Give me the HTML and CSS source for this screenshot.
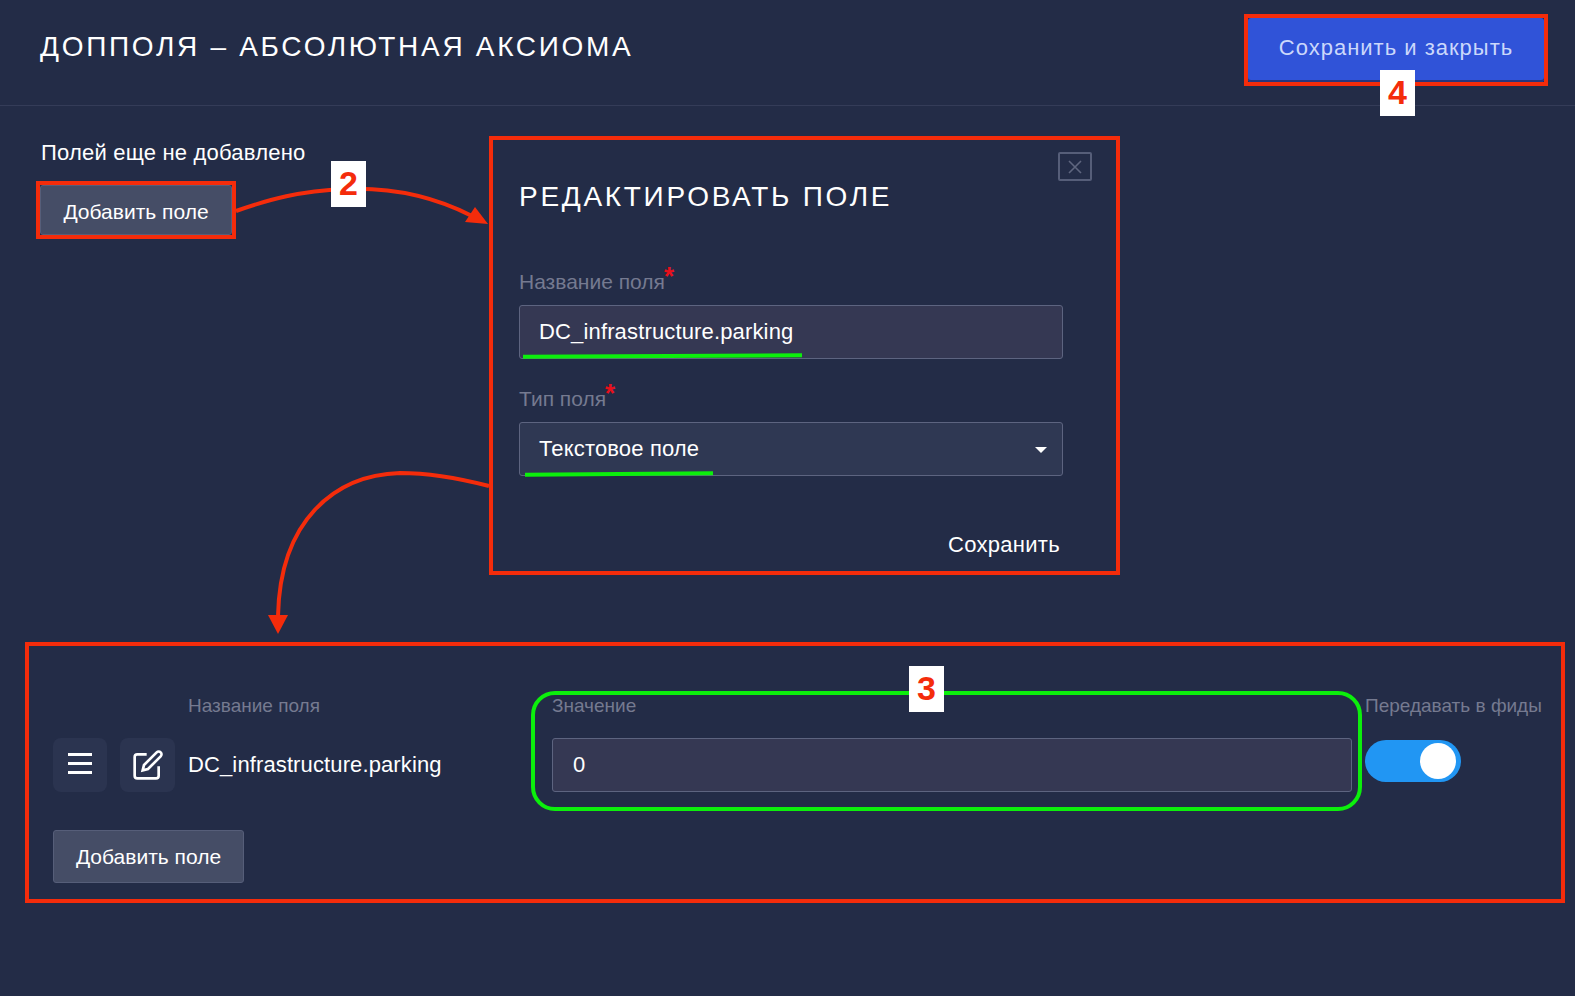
FILE: index.html
```html
<!DOCTYPE html>
<html lang="en">
<head>
    <meta charset="UTF-8">
    <meta name="viewport" content="width=device-width, initial-scale=1.0">
    <title>Допполя – Абсолютная Аксиома</title>
    <link rel="stylesheet" href="styles.css">
</head>
<body>
    <div class="page">
        <header class="page-head">
            <h1 class="page-title">Допполя – Абсолютная Аксиома</h1>
            <div class="mark"><button class="primary-button">Сохранить и закрыть</button></div>
        </header>

        <main class="content">
            <div class="top-row">
                <div class="empty-col">
                    <p class="empty-text">Полей еще не добавлено</p>
                    <div class="mark mark-add"><button class="add-button">Добавить поле</button></div>
                </div>

                <section class="mark modal">
                    <button class="close-button">
                        <svg viewBox="0 0 14 14" width="14" height="14"><path d="M1 1l12 12M13 1L1 13"/></svg>
                    </button>
                    <h2 class="modal-title">Редактировать поле</h2>
                    <label class="field-label">Название поля<span class="req">*</span></label>
                    <div class="text-input underlined">
                        DC_infrastructure.parking
                        <span class="green-line line-name"></span>
                    </div>
                    <label class="field-label">Тип поля<span class="req">*</span></label>
                    <div class="select-input underlined">
                        Текстовое поле
                        <span class="caret"></span>
                        <span class="green-line line-type"></span>
                    </div>
                    <div class="modal-foot"><button class="link-button">Сохранить</button></div>
                </section>
            </div>

            <section class="mark result">
                <div class="field-row">
                    <div class="tool-col">
                        <button class="tool-button">
                            <svg class="menu-icon" viewBox="0 0 24 21" width="24" height="21"><path d="M0 1.500h24M0 10.500h24M0 19.500h24"/></svg>
                        </button>
                        <button class="tool-button">
                            <svg viewBox="0 0 24 24" width="32" height="32"><path d="M11 4H4a2 2 0 0 0-2 2v14a2 2 0 0 0 2 2h14a2 2 0 0 0 2-2v-7"/><path d="M18.500 2.500a2.120 2.120 0 0 1 3 3L12 15l-4 1 1-4 9.500-9.500z"/></svg>
                        </button>
                    </div>
                    <div class="name-col">
                        <div class="col-label">Название поля</div>
                        <div class="name-value">DC_infrastructure.parking</div>
                    </div>
                    <div class="value-col">
                        <div class="col-label">Значение</div>
                        <div class="text-input value-input">0</div>
                        <div class="ring"></div>
                        <div class="badge badge-3">3</div>
                    </div>
                    <div class="feed-col">
                        <div class="col-label">Передавать в фиды</div>
                        <div class="toggle"><span class="knob"></span></div>
                    </div>
                </div>
                <button class="add-button add-button-lower">Добавить поле</button>
            </section>
        </main>

        <!-- arrows and numbers drawn over the screenshot -->
        <svg class="arrows" viewBox="0 0 1575 996" width="1575" height="996">
            <path class="arrow-line" d="M236 211C270 199 300 191 345 189C395 187 435 197 472 216"/>
            <path class="arrow-head" d="M475 207L488 224L465 222z"/>
            <path class="arrow-line" d="M489 486C450 476 420 473 400 473C335 475 280 520 278 616"/>
            <path class="arrow-head" d="M268 615H288L278 634z"/>
        </svg>
        <div class="badge badge-2">2</div>
        <div class="badge badge-4">4</div>
    </div>
</body>
</html>
```

FILE: styles.css
```css
body {
    margin: 0;
    background: #232c47;
    color: #fff;
    font-family: "Liberation Sans", Arial, sans-serif;
    font-size: 22px;
}

button {
    font-family: inherit;
    cursor: pointer;
}

.page {
    position: relative;
    width: 1575px;
    height: 996px;
    overflow: hidden;
}

/* Header */
.page-head {
    display: flex;
    justify-content: space-between;
    align-items: flex-start;
    box-sizing: border-box;
    height: 106px;
    padding: 14px 27px 0 40px;
    border-bottom: 1px solid #343c58;
}

.page-title {
    margin: 17px 0 0;
    font-size: 28px;
    font-weight: 400;
    line-height: 32px;
    letter-spacing: 2.7px;
    text-transform: uppercase;
}

.primary-button {
    display: block;
    width: 296px;
    height: 64px;
    padding: 0 0 4px;
    border: none;
    border-radius: 3px;
    background: #3053d8;
    box-shadow: inset 0 -2px 0 #27367e;
    color: #cbd8fb;
    font-size: 22px;
    letter-spacing: 1px;
}

/* Red boxes of the annotation */
.mark {
    box-sizing: border-box;
    border: 4px solid #f42c0b;
}

/* Top part */
.content {
    padding: 30px 9px 0 25px;
}

.top-row {
    display: flex;
    padding-left: 11px;
}

.empty-col {
    width: 453px;
    padding-top: 1px;
}

.empty-text {
    margin: 2px 0 0 5px;
    line-height: 28px;
    letter-spacing: 0.2px;
}

.mark-add {
    width: 200px;
    margin-top: 14px;
}

.add-button {
    display: block;
    box-sizing: border-box;
    width: 192px;
    height: 50px;
    border: 1px solid #565e79;
    border-radius: 3px;
    background: #454d66;
    color: #fff;
    font-size: 21px;
}

.mark-add .add-button {
    padding-top: 5px;
}

/* Modal */
.modal {
    position: relative;
    width: 631px;
    height: 439px;
    padding: 41px 26px 0;
}

.close-button {
    position: absolute;
    top: 12px;
    right: 24px;
    display: flex;
    align-items: center;
    justify-content: center;
    box-sizing: border-box;
    width: 34px;
    height: 29px;
    padding: 0;
    border: 2px solid #565e79;
    border-radius: 2px;
    background: transparent;
}

.close-button path {
    fill: none;
    stroke: #5f667f;
    stroke-width: 1.6;
}

.modal-title {
    margin: 0 0 56px;
    font-size: 28px;
    font-weight: 400;
    line-height: 32px;
    letter-spacing: 2.7px;
    text-transform: uppercase;
}

.field-label {
    display: block;
    height: 25px;
    margin-bottom: 11px;
    color: #757a90;
    font-size: 21px;
    line-height: 25px;
}

.req {
    position: relative;
    top: -4px;
    margin-left: -1px;
    color: #e8101c;
    font-size: 26px;
    font-weight: 700;
    line-height: 0;
}

.text-input,
.select-input {
    position: relative;
    box-sizing: border-box;
    height: 54px;
    padding-left: 19px;
    border: 1px solid #5d6480;
    border-radius: 3px;
    line-height: 52px;
    white-space: nowrap;
}

.text-input {
    background: #353853;
}

.select-input {
    background: #2f3853;
}

.underlined {
    width: 544px;
    margin-bottom: 27px;
    letter-spacing: 0.15px;
}

.green-line {
    position: absolute;
    height: 4px;
    background: #0cef0c;
}

.line-name {
    left: 3px;
    bottom: 0;
    width: 279px;
    transform: rotate(-0.3deg);
}

.line-type {
    left: 5px;
    bottom: -1px;
    width: 188px;
    transform: rotate(-0.4deg);
}

.caret {
    position: absolute;
    top: 24px;
    right: 15px;
    border-top: 6px solid #fff;
    border-left: 6px solid transparent;
    border-right: 6px solid transparent;
}

.modal-foot {
    display: flex;
    justify-content: flex-end;
    width: 544px;
    margin-top: 55px;
}

.link-button {
    padding: 0 3px 0 0;
    border: none;
    background: transparent;
    color: #fff;
    font-size: 22px;
    line-height: 28px;
    letter-spacing: 0.3px;
}

/* Lower part */
.result {
    position: relative;
    width: 1540px;
    height: 261px;
    margin-top: 67px;
    padding: 48px 0 0 24px;
}

.field-row {
    display: flex;
    align-items: flex-start;
    gap: 13px;
}

.tool-col {
    display: flex;
    gap: 13px;
    padding-top: 44px;
}

.tool-button {
    display: flex;
    align-items: center;
    justify-content: center;
    box-sizing: border-box;
    width: 54px;
    height: 54px;
    padding: 0;
    border: none;
    border-radius: 8px;
    background: #2b3450;
}

.tool-button + .tool-button {
    width: 55px;
}

.tool-button path {
    fill: none;
    stroke: #fff;
    stroke-width: 2;
}

.menu-icon {
    margin-bottom: 4px;
}

.tool-button .menu-icon path {
    stroke-width: 3;
}

.col-label {
    height: 24px;
    margin-bottom: 20px;
    color: #757a90;
    font-size: 19px;
    line-height: 24px;
}

.name-col {
    flex: none;
    width: 351px;
}

.name-value {
    font-size: 22px;
    line-height: 54px;
    letter-spacing: 0.12px;
}

.value-col {
    position: relative;
    flex: none;
    width: 800px;
}

.value-input {
    width: 800px;
    padding-left: 20px;
}

.ring {
    position: absolute;
    top: -3px;
    left: -21px;
    right: -10px;
    bottom: -19px;
    border: 4px solid #0cef0c;
    border-radius: 24px;
}

.feed-col {
    flex: none;
    white-space: nowrap;
}

.toggle {
    position: relative;
    width: 96px;
    height: 42px;
    margin-top: 22px;
    border-radius: 21px;
    background: #2196f3;
}

.knob {
    position: absolute;
    top: 3px;
    right: 5px;
    width: 36px;
    height: 36px;
    border-radius: 50%;
    background: #fff;
}

.add-button-lower {
    width: 191px;
    height: 53px;
    margin-top: 38px;
}

/* Overlay */
.arrows {
    position: absolute;
    top: 0;
    left: 0;
    pointer-events: none;
}

.arrow-line {
    fill: none;
    stroke: #f42c0b;
    stroke-width: 4;
}

.arrow-head {
    fill: #f42c0b;
}

.badge {
    position: absolute;
    width: 35px;
    height: 46px;
    background: #fff;
    color: #f42c0b;
    font-size: 34px;
    font-weight: 700;
    line-height: 44px;
    text-align: center;
}

.badge-2 {
    top: 161px;
    left: 331px;
}

.badge-3 {
    top: -28px;
    left: 357px;
}

.badge-4 {
    top: 70px;
    left: 1380px;
}
```
